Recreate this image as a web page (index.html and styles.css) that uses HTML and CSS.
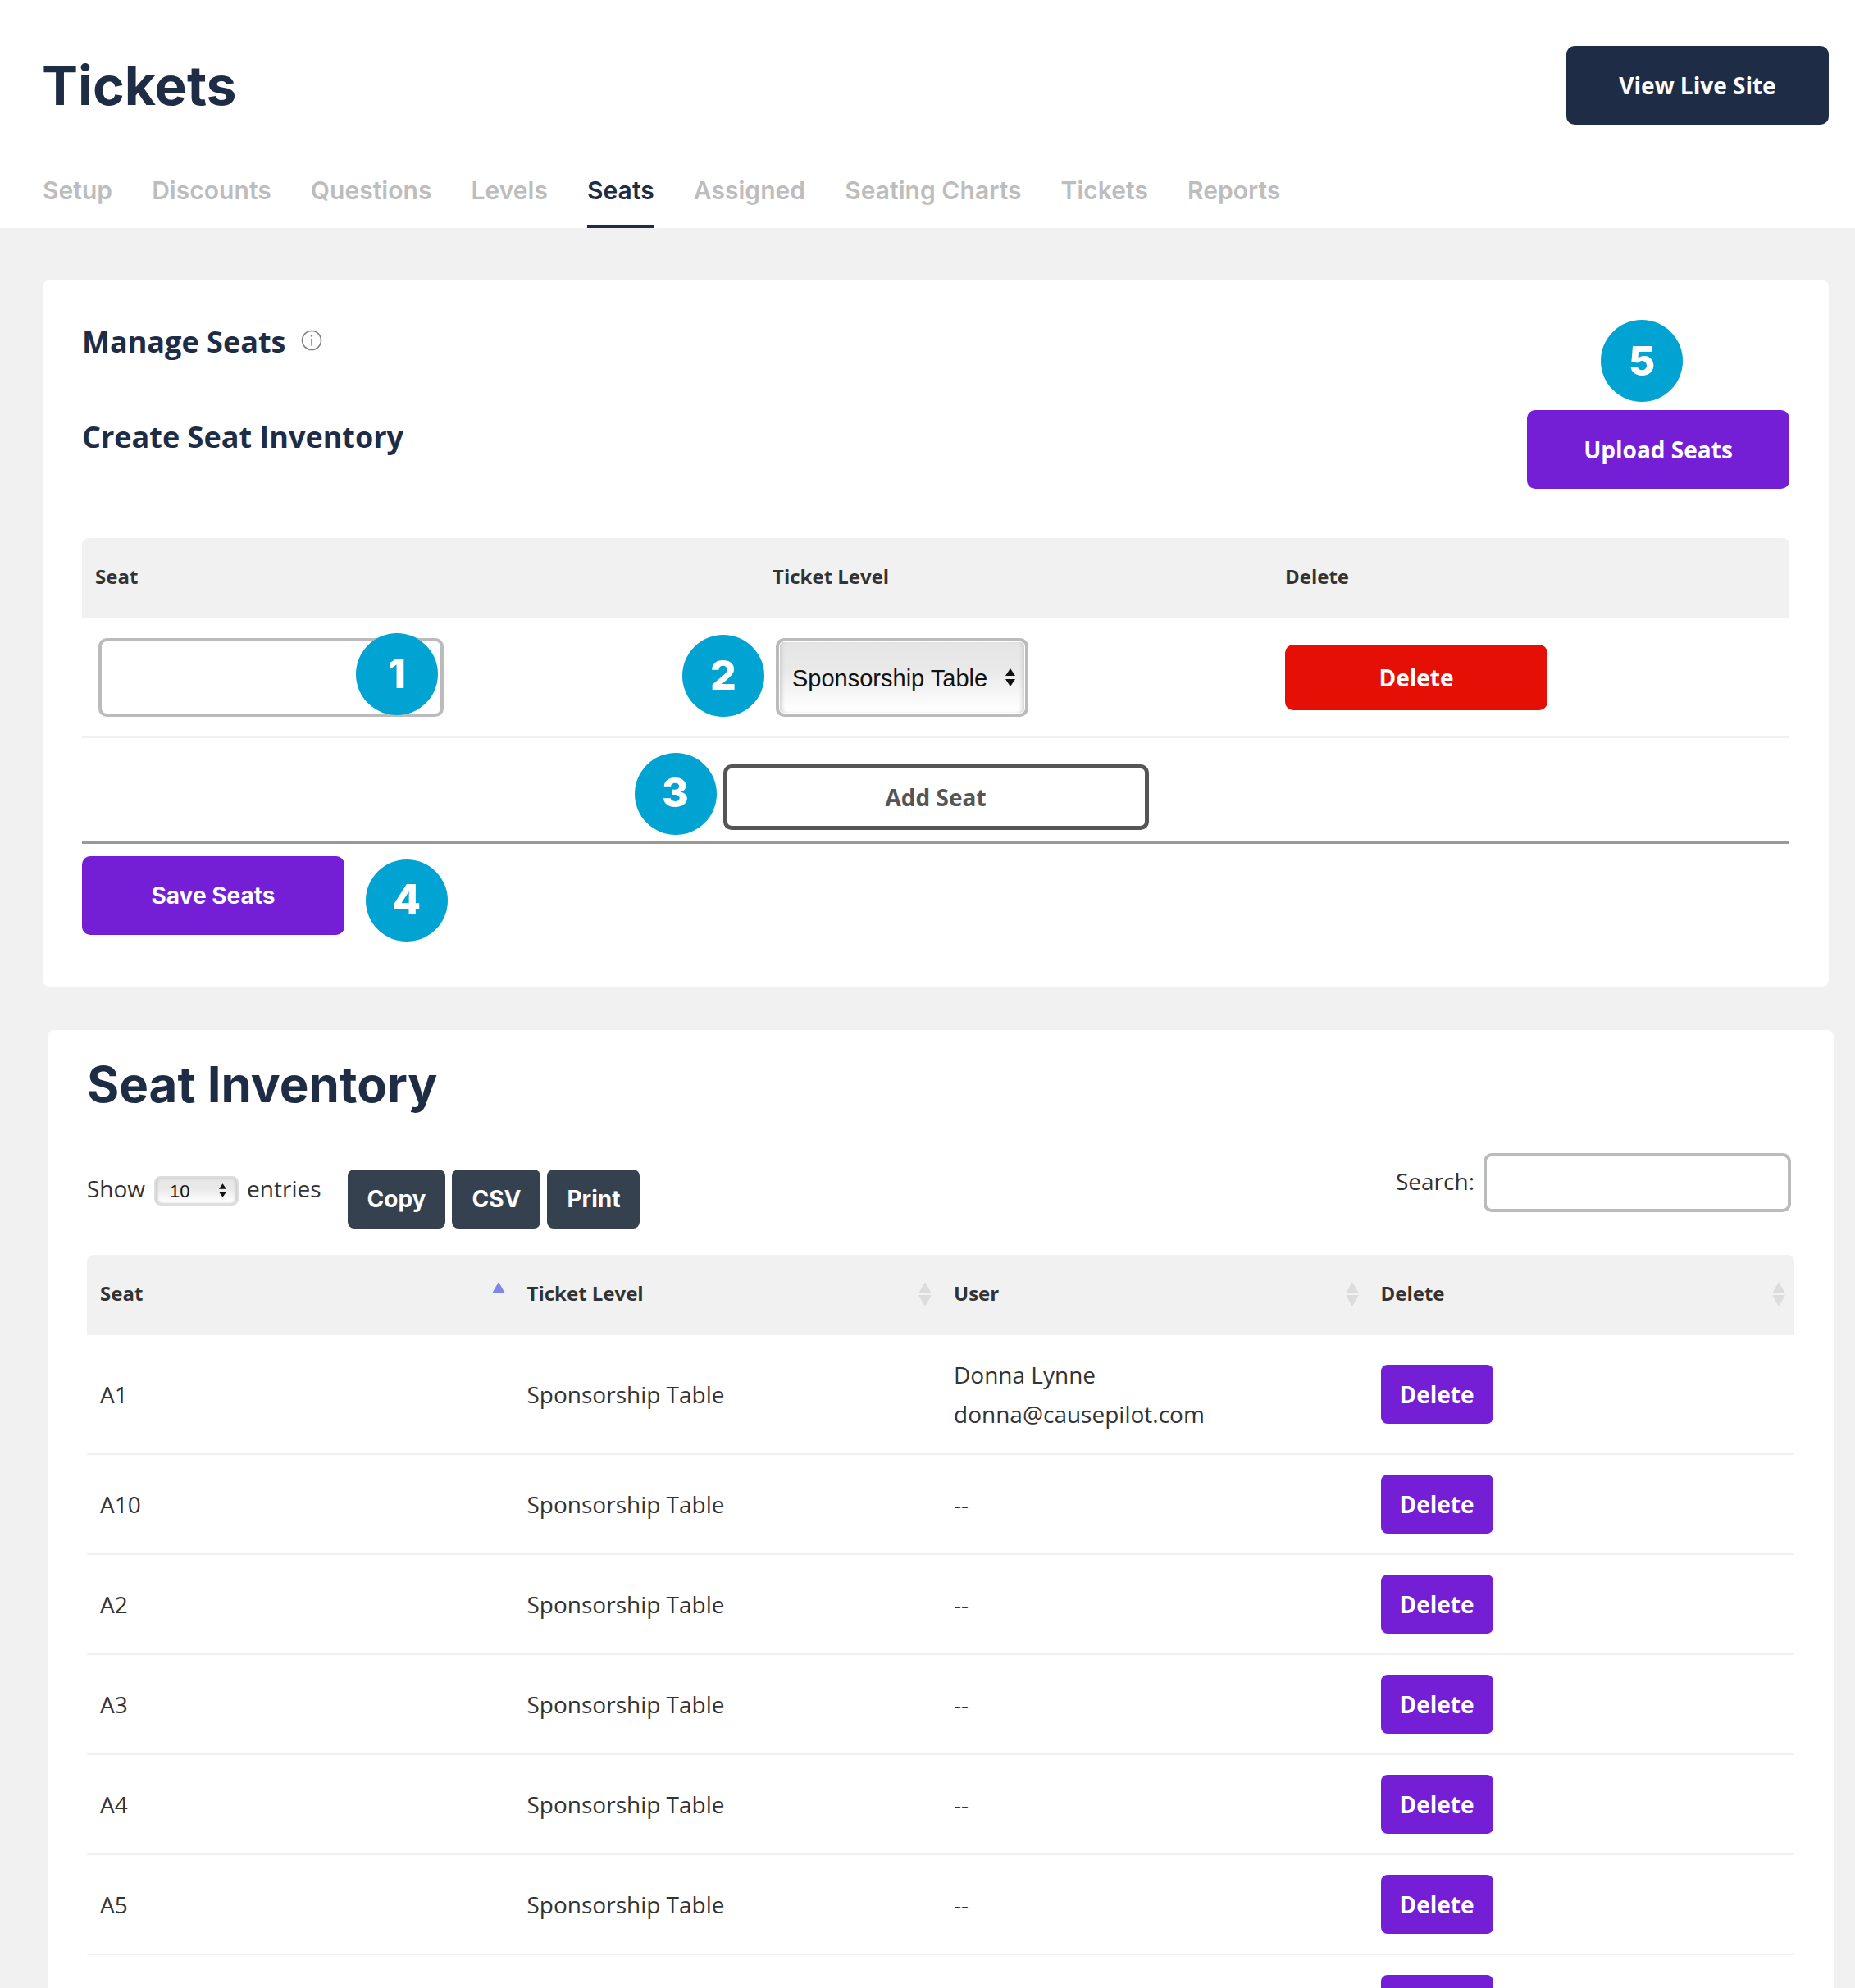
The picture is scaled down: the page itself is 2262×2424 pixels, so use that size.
FILE: index.html
```html
<!DOCTYPE html>
<html lang="en">
<head>
<meta charset="utf-8">
<title>Tickets</title>
<link rel="stylesheet" href="styles.css">
</head>
<body>
<header class="topbar">
  <div class="title-row">
    <h1 class="page-title">Tickets</h1>
    <a class="btn btn-navy">View Live Site</a>
  </div>
  <nav class="tabs">
    <a class="tab">Setup</a>
    <a class="tab">Discounts</a>
    <a class="tab">Questions</a>
    <a class="tab">Levels</a>
    <a class="tab tab-active">Seats</a>
    <a class="tab">Assigned</a>
    <a class="tab">Seating Charts</a>
    <a class="tab">Tickets</a>
    <a class="tab">Reports</a>
  </nav>
</header>
<main class="content">
  <section class="card card-manage">
    <div class="manage-head">
      <div class="manage-titles">
        <h2 class="sub-title">Manage Seats
          <svg class="info-icon" viewBox="0 0 26 26" width="26" height="26"><circle cx="13" cy="13" r="11.5" fill="none" stroke="#808080" stroke-width="1.6"/><circle cx="13" cy="7.6" r="1.2" fill="#808080"/><path d="M13 11v8.4" stroke="#808080" stroke-width="1.6" fill="none"/></svg>
        </h2>
        <h2 class="sub-title">Create Seat Inventory</h2>
      </div>
      <div class="upload-col">
        <span class="step step-five">5</span>
        <a class="btn btn-purple">Upload Seats</a>
      </div>
    </div>
    <div class="form-grid form-head">
      <div class="form-th">Seat</div>
      <div class="form-th">Ticket Level</div>
      <div class="form-th">Delete</div>
    </div>
    <div class="form-grid form-row">
      <div class="cell-seat">
        <div class="anchor">
          <input class="text-input seat-input" type="text" aria-label="Seat">
          <span class="step step-one">1</span>
        </div>
      </div>
      <div class="cell-level">
        <div class="anchor">
          <div class="select-box select-level">Sponsorship Table
            <svg class="updown" viewBox="0 0 14 24" width="14" height="24"><path d="M7 1l6 9H1zM7 23l-6-9h12z" fill="#111"/></svg>
          </div>
          <span class="step step-two">2</span>
        </div>
      </div>
      <div class="cell-del"><a class="btn btn-red">Delete</a></div>
    </div>
    <div class="add-row">
      <div class="anchor">
        <a class="btn btn-outline">Add Seat</a>
        <span class="step step-three">3</span>
      </div>
    </div>
    <div class="save-row">
      <a class="btn btn-purple btn-save">Save Seats</a>
      <span class="step step-four">4</span>
    </div>
  </section>

  <section class="card card-inventory">
    <h2 class="inventory-title">Seat Inventory</h2>
    <div class="toolbar">
      <div class="toolbar-left">
        <span class="plain">Show</span>
        <div class="select-box select-small">10
          <svg class="updown-small" viewBox="0 0 12 20" width="11" height="19"><path d="M6 1l5 7H1zM6 19l-5-7h10z" fill="#111"/></svg>
        </div>
        <span class="plain">entries</span>
        <div class="export-group">
          <a class="btn-dark">Copy</a>
          <a class="btn-dark">CSV</a>
          <a class="btn-dark">Print</a>
        </div>
      </div>
      <label class="search"><span class="plain">Search:</span><input class="text-input search-input" type="text"></label>
    </div>
    <table class="seat-table">
      <thead>
        <tr>
          <th>Seat<svg class="sort" viewBox="0 0 16 30" width="16" height="30"><path d="M8 0l8 14H0z" fill="#7f86e6"/></svg></th>
          <th>Ticket Level<svg class="sort" viewBox="0 0 16 30" width="16" height="30"><path d="M8 0l8 14H0zM8 30L0 16h16z" fill="#dcdcdc"/></svg></th>
          <th>User<svg class="sort" viewBox="0 0 16 30" width="16" height="30"><path d="M8 0l8 14H0zM8 30L0 16h16z" fill="#dcdcdc"/></svg></th>
          <th>Delete<svg class="sort" viewBox="0 0 16 30" width="16" height="30"><path d="M8 0l8 14H0zM8 30L0 16h16z" fill="#dcdcdc"/></svg></th>
        </tr>
      </thead>
      <tbody>
        <tr><td>A1</td><td>Sponsorship Table</td><td>Donna Lynne<br>donna@causepilot.com</td><td><a class="btn-del">Delete</a></td></tr>
        <tr><td>A10</td><td>Sponsorship Table</td><td>--</td><td><a class="btn-del">Delete</a></td></tr>
        <tr><td>A2</td><td>Sponsorship Table</td><td>--</td><td><a class="btn-del">Delete</a></td></tr>
        <tr><td>A3</td><td>Sponsorship Table</td><td>--</td><td><a class="btn-del">Delete</a></td></tr>
        <tr><td>A4</td><td>Sponsorship Table</td><td>--</td><td><a class="btn-del">Delete</a></td></tr>
        <tr><td>A5</td><td>Sponsorship Table</td><td>--</td><td><a class="btn-del">Delete</a></td></tr>
        <tr><td></td><td></td><td></td><td><a class="btn-del"></a></td></tr>
      </tbody>
    </table>
  </section>
</main>
</body>
</html>
```
FILE: styles.css
```css
* { box-sizing: border-box; }
html, body { margin: 0; height: 2424px; overflow: hidden; }
body { background: #f1f1f1; font-family: "Open Sans", sans-serif; color: #333; font-size: 28px; }

.topbar { background: #fff; height: 278px; padding: 56px 32px 0 52px; display: flex; flex-direction: column; }
.title-row { display: flex; justify-content: space-between; align-items: center; height: 96px; }
.page-title { margin: 0 0 0 -1px; font-family: Inter, sans-serif; font-size: 66px; font-weight: 700; color: #1e2c46; line-height: 80px; }
.tabs { display: flex; gap: 48px; margin-top: auto; }
.tab { font-family: Inter, sans-serif; font-size: 30px; font-weight: 600; letter-spacing: 0.04px; color: #bdbdbd; height: 82px; padding-top: 16px; line-height: 40px; }
.tab-active { color: #1e2c46; border-bottom: 4px solid #1e2c46; }

.btn { display: flex; align-items: center; justify-content: center; width: 320px; height: 96px; border-radius: 10px; color: #fff; font-weight: 700; font-size: 28px; }
.btn-navy { background: #1e2c46; }
.btn-purple { background: #741ed6; }
.btn-red { background: #e60f05; height: 80px; }
.btn-save { font-family: Inter, sans-serif; font-size: 28px; }
.btn-outline { width: 519px; height: 80px; background: #fff; border: 5px solid #555; color: #555; }

.content { padding-top: 64px; }
.card { background: #fff; border-radius: 8px; }
.card-manage { margin: 0 32px 0 52px; padding: 48px 48px 55px; height: 861px; }
.card-inventory { margin: 53px 26px 0 58px; padding: 31px 48px 0; }

.manage-head { display: flex; justify-content: space-between; align-items: flex-start; }
.manage-titles { padding-top: 2px; display: flex; flex-direction: column; gap: 66px; }
.sub-title { margin: 0; font-size: 36px; font-weight: 700; line-height: 50px; color: #1e2c46; display: flex; align-items: center; gap: 19px; }
.info-icon { display: block; margin-top: -4px; }
.upload-col { display: flex; flex-direction: column; align-items: flex-start; gap: 10px; }

.step { width: 100px; height: 100px; padding-bottom: 2px; border-radius: 50%; background: #00a3d1; color: #fff; font-family: Inter, sans-serif; font-weight: 800; font-size: 50px; display: flex; align-items: center; justify-content: center; }
.step-five { margin-left: 90px; padding-bottom: 0; }
.anchor { position: relative; }
.step-one { position: absolute; left: 314px; top: -6px; }
.step-two { position: absolute; left: -114px; top: -4px; }
.step-three { position: absolute; left: -108px; top: -14px; padding-bottom: 5px; }
.step-four { margin-top: 4px; padding-bottom: 4px; }

.form-grid { display: grid; grid-template-columns: 826px 625px 1fr; }
.form-head { margin-top: 60px; height: 98px; padding-bottom: 6px; background: #f1f1f1; align-items: center; border-radius: 8px 8px 0 0; }
.form-th { padding-left: 16px; font-size: 24px; font-weight: 700; color: #333; }
.form-row { height: 146px; align-items: center; border-bottom: 2px solid #f1f1f1; }
.cell-seat { padding-left: 20px; }
.cell-level { padding-left: 20px; }
.cell-del { padding-left: 16px; }

.text-input { display: block; border: 4px solid #bbb; border-radius: 10px; background: #fff; outline: none; }
.seat-input { width: 421px; height: 96px; }
.select-box { position: relative; background: linear-gradient(#e5e5e5, #e9e9e9 40%, #fdfdfd 90%); font-family: "Liberation Sans", sans-serif; color: #111; }
.select-level { width: 308px; height: 96px; border: 4px solid #bbb; border-radius: 10px; box-shadow: inset 0 0 0 1px #fff, inset 5px 0 5px -2px #ccc, inset -5px 0 5px -2px #ccc; font-size: 29px; line-height: 90px; padding-left: 16px; }
.updown { position: absolute; right: 11px; top: 32px; }
.select-small { width: 103px; height: 36px; margin: 8px 10px 0 11px; border: 2px solid #ddd; border-radius: 8px; box-shadow: inset 2px 0 3px #ccc, inset -2px 0 3px #ccc; font-size: 22px; line-height: 34px; padding-left: 17px; }
.updown-small { position: absolute; right: 12px; top: 6px; }

.add-row { padding-top: 32px; display: flex; justify-content: center; border-bottom: 3px solid #999; box-sizing: content-box; height: 94px; }
.save-row { display: flex; align-items: flex-start; gap: 26px; margin-top: 15px; }

.inventory-title { margin: 0; font-family: Inter, sans-serif; font-size: 60px; font-weight: 700; line-height: 70px; color: #1e2c46; }
.toolbar { margin-top: 49px; height: 92px; padding-right: 4px; display: flex; justify-content: space-between; align-items: flex-start; }
.toolbar-left { display: flex; align-items: flex-start; margin-top: 20px; }
.plain { line-height: 46px; color: #333; font-size: 28px; }
.export-group { display: flex; gap: 8px; margin-left: 32px; }
.btn-dark { display: flex; align-items: center; justify-content: center; height: 72px; padding: 0 24px; background: #364150; color: #fff; border-radius: 8px; font-family: Inter, sans-serif; font-weight: 700; font-size: 28px; }
.search { display: flex; align-items: flex-start; gap: 11px; }
.search .plain { margin-top: 11px; }
.search-input { width: 375px; height: 72px; }

.seat-table { width: 100%; margin-top: 32px; table-layout: fixed; border-collapse: separate; border-spacing: 0; }
.seat-table th { position: relative; height: 98px; padding: 0 16px 6px; background: #f1f1f1; text-align: left; font-size: 24px; font-weight: 700; color: #333; }
.seat-table th:first-child { border-top-left-radius: 8px; }
.seat-table th:last-child { border-top-right-radius: 8px; }
.sort { position: absolute; right: 11px; top: 33px; }
.seat-table td { padding: 24px 16px; border-bottom: 2px solid #f1f1f1; line-height: 48px; font-size: 28px; color: #333; vertical-align: middle; }
.btn-del { display: flex; align-items: center; justify-content: center; width: 137px; height: 72px; border-radius: 8px; background: #741ed6; color: #fff; font-weight: 700; }
```
